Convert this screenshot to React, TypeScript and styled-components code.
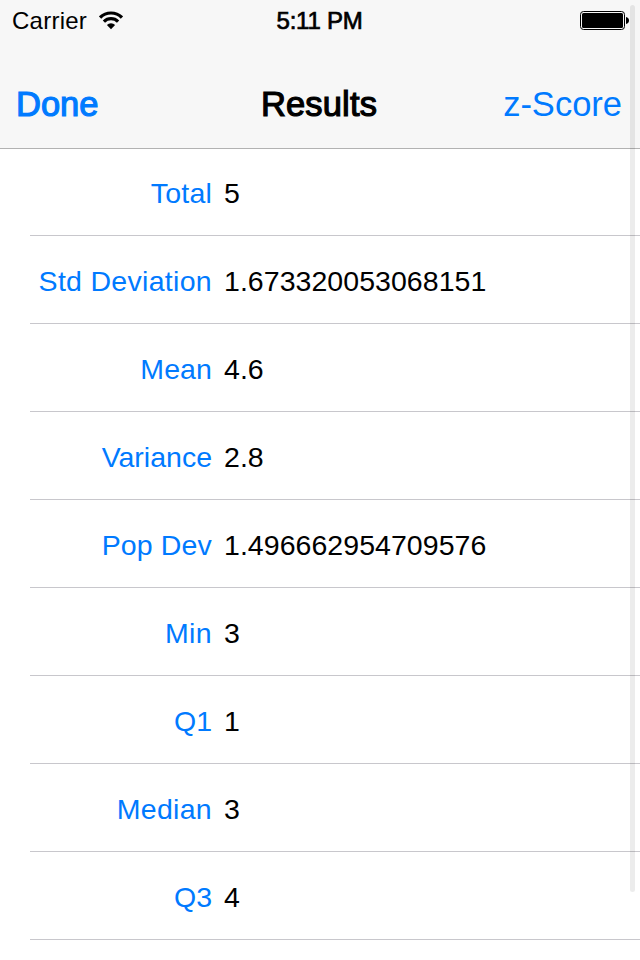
import React from "react";
import styled, { createGlobalStyle } from "styled-components";

interface ResultItem {
  label: string;
  value: string;
  tracking: number;
}

interface TextProps {
  $tracking?: number;
}

const colors = {
  tint: "#007aff",
  bar: "#f7f7f7",
  barLine: "#b2b2b2",
  separator: "#c8c7cc",
};

const results: ResultItem[] = [
  { label: "Total", value: "5", tracking: 0.2 },
  { label: "Std Deviation", value: "1.673320053068151", tracking: 0.3 },
  { label: "Mean", value: "4.6", tracking: 0.1 },
  { label: "Variance", value: "2.8", tracking: 0 },
  { label: "Pop Dev", value: "1.496662954709576", tracking: 0.15 },
  { label: "Min", value: "3", tracking: 0.4 },
  { label: "Q1", value: "1", tracking: 0 },
  { label: "Median", value: "3", tracking: 0.3 },
  { label: "Q3", value: "4", tracking: 0 },
];

const GlobalStyle = createGlobalStyle`
  * {
    box-sizing: border-box;
  }
  body {
    margin: 0;
    background-color: #fff;
    font-family: "Liberation Sans", Arial, sans-serif;
    color: #000;
  }
  dl, dt, dd, h1 {
    margin: 0;
  }
`;

const Screen = styled.main`
  position: relative;
  width: 640px;
  height: 960px;
  overflow: hidden;
  background-color: #fff;
`;

const Header = styled.header`
  height: 149px;
  background-color: ${colors.bar};
  border-bottom: 1px solid ${colors.barLine};
`;

const StatusBar = styled.div`
  display: grid;
  grid-template-columns: 1fr auto 1fr;
  align-items: center;
  height: 40px;
  padding: 1px 11px 0 12px;
  font-size: 24px;
  line-height: 28px;
`;

const Network = styled.div`
  display: flex;
  align-items: center;
  gap: 12px;
`;

const Carrier = styled.span`
  letter-spacing: 0.25px;
`;

const Time = styled.span`
  margin-left: -2px;
  letter-spacing: -0.25px;
  -webkit-text-stroke: 0.7px #000;
`;

const Battery = styled.svg`
  justify-self: end;
`;

const NavBar = styled.nav`
  display: grid;
  grid-template-columns: 1fr auto 1fr;
  align-items: center;
  height: 88px;
  margin-top: 20px;
  padding: 0 18px 0 16px;
  font-size: 34.5px;
  line-height: 40px;
`;

const NavButton = styled.button<{ $strong?: boolean }>`
  justify-self: ${({ $strong }) => ($strong ? "start" : "end")};
  padding: 0;
  border: 0;
  background: none;
  font: inherit;
  color: ${colors.tint};
  ${({ $strong }) => $strong && `-webkit-text-stroke: 1.2px ${colors.tint};`}
`;

const Title = styled.h1`
  font-size: inherit;
  font-weight: normal;
  letter-spacing: 0.15px;
  -webkit-text-stroke: 1.2px #000;
`;

const List = styled.dl`
  margin-top: -1px;
  padding-left: 30px;
`;

const Row = styled.div`
  display: grid;
  grid-template-columns: 182px 1fr;
  column-gap: 12px;
  align-items: center;
  height: 88px;
  padding-top: 3px;
  border-bottom: 1px solid ${colors.separator};
  font-size: 28.5px;
  line-height: 32px;
`;

const Label = styled.dt<TextProps>`
  color: ${colors.tint};
  text-align: right;
  white-space: nowrap;
  letter-spacing: ${({ $tracking }) => $tracking}px;
`;

const Value = styled.dd`
  letter-spacing: 0.05px;
`;

const ScrollBar = styled.div`
  position: absolute;
  top: 5px;
  right: 5px;
  width: 5px;
  height: 887px;
  border-radius: 3px;
  background-color: rgba(0, 0, 0, 0.075);
`;

const WifiIcon: React.FC = () => (
  <svg width="24" height="19" viewBox="0 0 24 19">
    <g fill="none" stroke="#000" strokeWidth="3.2">
      <path d="M1.100 6.500a15.400 15.400 0 0 1 21.800 0" />
      <path d="M4.900 10.600a10 10 0 0 1 14.200 0" />
    </g>
    <path d="M7.900 14a5.800 5.800 0 0 1 8.200 0L12 18.200Z" />
  </svg>
);

const App: React.FC = () => {
  return (
    <>
      <GlobalStyle />
      <Screen>
        <Header>
          <StatusBar>
            <Network>
              <Carrier>Carrier</Carrier>
              <WifiIcon />
            </Network>
            <Time>5:11 PM</Time>
            <Battery width="49" height="20" viewBox="0 0 49 20">
              <rect x="0.5" y="0.5" width="44" height="18" rx="3" fill="none" stroke="#000" />
              <rect x="2" y="2" width="41" height="15" rx="1.5" />
              <path d="M46 6c2 .4 3 1.800 3 3.500s-1 3.100-3 3.500Z" />
            </Battery>
          </StatusBar>
          <NavBar>
            <NavButton $strong>Done</NavButton>
            <Title>Results</Title>
            <NavButton>z-Score</NavButton>
          </NavBar>
        </Header>
        <List>
          {results.map(({ label, value, tracking }) => (
            <Row key={label}>
              <Label $tracking={tracking}>{label}</Label>
              <Value>{value}</Value>
            </Row>
          ))}
        </List>
        <ScrollBar />
      </Screen>
    </>
  );
};

export default App;
